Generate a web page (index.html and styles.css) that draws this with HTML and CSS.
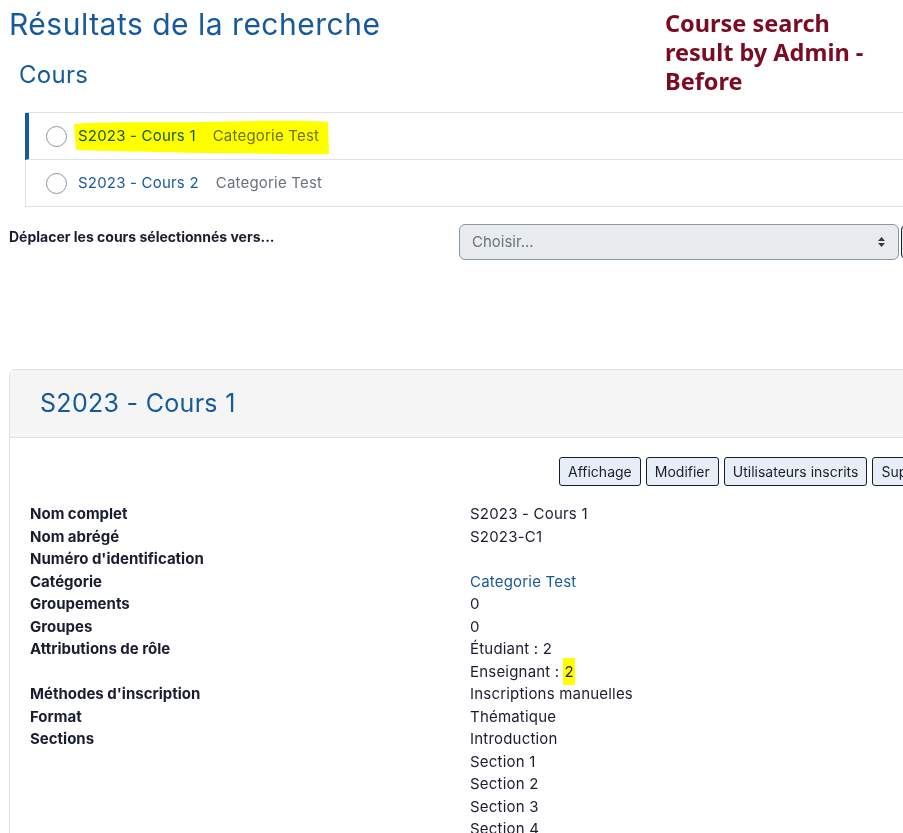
FILE: index.html
```html
<!DOCTYPE html>
<html lang="fr">
<head>
    <meta charset="UTF-8">
    <meta name="viewport" content="width=device-width, initial-scale=1.0">
    <title>Résultats de la recherche</title>
    <link rel="stylesheet" href="styles.css">
</head>
<body>

    <!-- page heading + note -->
    <div class="top">
        <div class="titles">
            <h1 id="title">Résultats de la recherche</h1>
            <h2 class="subtitle">Cours</h2>
        </div>
        <p class="note">Course search<br>result by Admin -<br>Before</p>
    </div>

    <!-- course list -->
    <ul class="courses">
        <li class="course active">
            <span class="check"></span>
            <a href="#" class="course-name">S2023 - Cours 1</a>
            <span class="course-cat">Categorie Test</span>
            <svg class="marker" width="260" height="40" viewBox="0 0 260 40">
                <path d="M2 6 C40 3 90 5 130 4 C180 3 220 2 256 4 L257 36 C220 37 180 35 130 35 C90 34 40 33 4 32 Z" fill="#ffff00"/>
            </svg>
        </li>
        <li class="course">
            <span class="check"></span>
            <a href="#" class="course-name">S2023 - Cours 2</a>
            <span class="course-cat">Categorie Test</span>
        </li>
    </ul>

    <!-- move form -->
    <div class="move">
        <label class="move-label">Déplacer les cours sélectionnés vers...</label>
        <div class="select">
            <span>Choisir...</span>
            <svg width="9" height="12" viewBox="0 0 9 12"><path d="M4.5 1 L8 5 L1 5 Z M4.5 11 L8 7 L1 7 Z" fill="#343a40"/></svg>
        </div>
        <button type="button" class="go">Déplacer</button>
    </div>

    <!-- course detail card -->
    <div class="card">
        <div class="card-header">
            <h3 class="card-title">S2023 - Cours 1</h3>
        </div>
        <div class="card-body">
            <div class="actions">
                <button type="button" class="btn">Affichage</button>
                <button type="button" class="btn">Modifier</button>
                <button type="button" class="btn">Utilisateurs inscrits</button>
                <button type="button" class="btn">Supprimer</button>
            </div>
            <dl class="details">
                <dt>Nom complet</dt><dd>S2023 - Cours 1</dd>
                <dt>Nom abrégé</dt><dd>S2023-C1</dd>
                <dt>Numéro d'identification</dt><dd>&nbsp;</dd>
                <dt>Catégorie</dt><dd><a href="#">Categorie Test</a></dd>
                <dt>Groupements</dt><dd>0</dd>
                <dt>Groupes</dt><dd>0</dd>
                <dt>Attributions de rôle</dt><dd>Étudiant : 2<br>Enseignant :<span class="hl">2</span></dd>
                <dt>Méthodes d'inscription</dt><dd>Inscriptions manuelles</dd>
                <dt>Format</dt><dd>Thématique</dd>
                <dt>Sections</dt><dd>Introduction<br>Section 1<br>Section 2<br>Section 3<br>Section 4<br>Section 5</dd>
            </dl>
        </div>
    </div>

</body>
</html>
```

FILE: styles.css
```css
*{
    margin: 0;
    padding: 0;
    box-sizing: border-box;
}
html, body{
    overflow: hidden;
}
body{
    width: 1100px;
    padding: 0 0 0 9px;
    font-family: Inter, "Noto Sans", sans-serif;
    font-size: 15px;
    line-height: 22.5px;
    color: #1a1d30;
    background: #fff;
}
a{
    color: #16599c;
    text-decoration: none;
}

/* heading */
.top{
    display: flex;
    width: 894px;
    justify-content: space-between;
}
#title{
    margin-top: 6px;
    font-size: 30px;
    line-height: 36px;
    font-weight: 400;
    letter-spacing: 0.5px;
    color: #16599c;
}
.subtitle{
    margin: 18px 0 0 10px;
    font-size: 24px;
    line-height: 30px;
    font-weight: 400;
    letter-spacing: 0.3px;
    color: #16599c;
}
.note{
    margin: 9px 16px 0 0;
    width: 222px;
    font-family: "Noto Sans", sans-serif;
    font-size: 23.5px;
    line-height: 29px;
    font-weight: 700;
    color: #7c0a20;
}

/* course list */
.courses{
    list-style: none;
    margin: 16px 0 0 16px;
    border-top: 1px solid #dee2e6;
    border-left: 1px solid #dee2e6;
}
.course{
    position: relative;
    display: flex;
    align-items: center;
    height: 47px;
    padding-left: 20px;
    border-bottom: 1px solid #dee2e6;
}
.course.active{
    border-left: 4px solid #16599c;
    margin-left: -1px;
    padding-left: 17px;
}
.check{
    width: 21px;
    height: 21px;
    border: 1px solid #8f959e;
    border-radius: 50%;
    margin-right: 11px;
}
.course-name{
    margin-right: 17px;
    letter-spacing: 0.2px;
}
.course-cat{
    color: #6a737b;
    letter-spacing: 0.2px;
}
.marker{
    position: absolute;
    left: 43px;
    top: 5px;
    mix-blend-mode: multiply;
}

/* move form */
.move{
    display: flex;
    align-items: flex-start;
    margin-top: 17px;
}
.move-label{
    width: 450px;
    margin-top: 2px;
    font-size: 14px;
    font-weight: 700;
    line-height: 22px;
}
.select{
    display: flex;
    align-items: center;
    justify-content: space-between;
    width: 440px;
    height: 36px;
    padding: 0 12px;
    border: 1px solid #8f959e;
    border-radius: 6px;
    background: #e9ecef;
    color: #6a737b;
}
.go{
    margin-left: 2px;
    height: 36px;
    padding: 0 12px;
    border: 1px solid #1a1d30;
    border-radius: 6px;
    background: #e7eef8;
    font: inherit;
}

/* card */
.card{
    margin-top: 109px;
    border: 1px solid #dee2e6;
    border-radius: 6px 0 0 0;
}
.card-header{
    height: 68px;
    padding: 0 30px;
    display: flex;
    align-items: center;
    background: #f5f5f5;
    border-bottom: 1px solid #dee2e6;
}
.card-title{
    font-size: 25px;
    font-weight: 400;
    letter-spacing: 0.3px;
    color: #16599c;
}
.card-body{
    padding: 19px 20px 0 20px;
}
.actions{
    display: flex;
    gap: 5px;
    padding-left: 529px;
}
.btn{
    height: 29px;
    padding: 0 8px;
    border: 1px solid #1a1d30;
    border-radius: 3px;
    background: #e7eef8;
    font-family: inherit;
    font-size: 14px;
    color: #1a1d30;
}
.details{
    display: grid;
    grid-template-columns: 440px 1fr;
    margin-top: 17px;
}
.details dt{
    font-weight: 700;
}
.details dd{
    letter-spacing: 0.2px;
}
.hl{
    margin-left: 4px;
    padding: 4px 1px;
    background: #ffff00;
}
```
